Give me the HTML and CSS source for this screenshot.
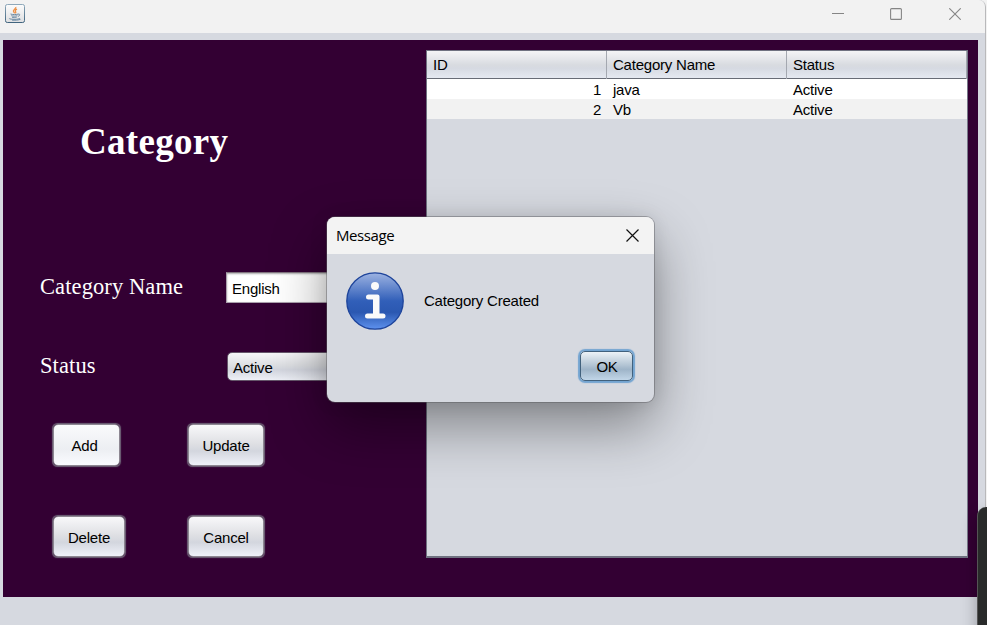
FILE: index.html
```html
<!DOCTYPE html>
<html lang="en">
<head>
<meta charset="utf-8">
<title>Category</title>
<link rel="stylesheet" href="styles.css">
</head>
<body>
<div class="window">
  <header class="titlebar">
    <svg class="java" width="20" height="20" viewBox="0 0 20 20">
      <defs><linearGradient id="jb" x1="0" y1="0" x2="0" y2="1"><stop offset="0" stop-color="#fcfcfc"/><stop offset="1" stop-color="#dedfe1"/></linearGradient>
      <linearGradient id="js" x1="0" y1="0" x2="0" y2="1"><stop offset="0" stop-color="#8ea8ba"/><stop offset="1" stop-color="#40647e"/></linearGradient></defs>
      <rect x=".5" y=".5" width="19" height="18" rx="1.8" fill="url(#jb)" stroke="url(#js)"/>
      <path d="M10.800 3c.7 1.800-3.400 2.700-2.300 4.500.3.7 1 1 .9 1.800M12 5.200c-2 1-2 1.600-1.300 2.600.4.7 0 1.100-.4 1.500" fill="none" stroke="#ed9147" stroke-width="1.300"/>
      <path d="M5.500 10c2 .8 6 .7 8 0M6.300 11.700c2 .6 4.300.6 6 0M7 13.200c1.500.5 3.300.5 4.700 0M13.300 10.200c2-.5 2 1.600-.4 2.200M4.500 14.300c-1.500 1 8 1.600 10.500.2M7 16.100c3 .3 6 .1 8.500-.8" fill="none" stroke="#6d8ba4" stroke-width="1"/>
    </svg>
    <div class="controls">
      <svg width="12" height="12" viewBox="0 0 12 12"><path d="M0 5.500h12"/></svg>
      <svg width="12" height="12" viewBox="0 0 12 12"><rect x=".6" y=".6" width="10.800" height="10.800" rx="1"/></svg>
      <svg width="12" height="12" viewBox="0 0 12 12"><path d="M.3.3l11.400 11.400M11.700.3L.3 11.700"/></svg>
    </div>
  </header>
  <main class="panel">
    <section class="form">
      <h1>Category</h1>
      <div class="field name"><label>Category Name</label><div class="input">English</div></div>
      <div class="field status"><label>Status</label><div class="combo">Active</div></div>
      <div class="buttons">
        <button class="add">Add</button><button class="update">Update</button>
        <button class="delete">Delete</button><button class="cancel">Cancel</button>
      </div>
    </section>
    <section class="table">
      <div class="row head"><span>ID</span><span>Category Name</span><span>Status</span></div>
      <div class="row"><span>1</span><span>java</span><span>Active</span></div>
      <div class="row alt"><span>2</span><span>Vb</span><span>Active</span></div>
    </section>
  </main>
</div>
<div class="dialog">
  <div class="dialog-title"><span>Message</span>
    <svg width="13" height="13" viewBox="0 0 13 13"><path d="M.5.5l12 12M12.500.5l-12 12" stroke="#111" stroke-width="1.200"/></svg>
  </div>
  <div class="message">
    <svg width="58" height="58" viewBox="0 0 58 58">
      <defs><linearGradient id="ib" x1="0" y1="0" x2="0" y2="1"><stop offset="0" stop-color="#9db3e2"/><stop offset=".5" stop-color="#315fb9"/><stop offset=".7" stop-color="#2b58b1"/><stop offset="1" stop-color="#5e92ee"/></linearGradient></defs>
      <circle cx="29" cy="29" r="28.200" fill="url(#ib)" stroke="#1e449b" stroke-width="1.300"/>
      <circle cx="29" cy="14" r="4" fill="#fafafa"/>
      <path d="M22.500 22.500H31.500a2 2 0 0 1 2 2V41.500H37a2.500 2.500 0 0 1 0 5H21.500a2.500 2.500 0 0 1 0-5H27V27.500H22.500a2.500 2.500 0 0 1 0-5z" fill="#fafafa"/>
    </svg>
    <span>Category Created</span>
  </div>
  <button class="ok">OK</button>
</div>
<div class="dark-edge"></div>
</body>
</html>
```
FILE: styles.css
```css
* { box-sizing: border-box; }
body {
  margin: 0;
  width: 987px;
  height: 625px;
  overflow: hidden;
  position: relative;
  background: #f2f2f2;
  font: 15px/20px "Liberation Sans", Arial, sans-serif;
  letter-spacing: -0.22px;
  color: #000;
}
.window {
  width: 986px;
  height: 625px;
  background: #d6d9e0;
  border-right: 1px solid #b9b9bb;
  border-top-right-radius: 7px;
  overflow: hidden;
}
.titlebar {
  height: 33px;
  background: #f2f2f2;
  display: flex;
  justify-content: space-between;
  padding: 4px 24px 0 5px;
}
.controls { display: flex; gap: 46px; padding-top: 4px; }
.controls svg { fill: none; stroke: #858585; stroke-width: 1.1; }
.controls svg:nth-child(2) { margin-right: 1px; }
.panel {
  width: 975px;
  height: 557px;
  margin: 7px 0 0 3px;
  background: #330033;
  display: flex;
}
.form { width: 423px; padding: 81px 0 0 37px; flex: none; }
h1 {
  margin: 0 0 0 40px;
  height: 42px;
  font: bold 37px/42px "Liberation Serif", "Times New Roman", serif;
  letter-spacing: 0.3px;
  color: #fff;
}
.field { display: flex; color: #fff; }
.field label {
  width: 186px;
  flex: none;
  font: 22.5px/28px "Liberation Serif", "Times New Roman", serif;
  letter-spacing: 0.1px;
}
.name { margin-top: 109px; height: 31px; }
.name label { padding-top: 1px; }
.status { margin-top: 49px; height: 29px; }
.input, .combo { width: 170px; color: #000; }
.input {
  height: 31px;
  padding: 6px 5px;
  background: #fff;
  border: 1px solid #aaa0ac;
  border-top-color: #81747f;
  box-shadow: inset 0 1px 2px #aaa;
}
.combo {
  margin-left: 1px;
  padding: 6px 5px;
  border: 1px solid #65566a;
  border-radius: 5px;
  background: linear-gradient(#f6f6f8, #dcdee2 48%, #d3d6df 62%, #eef0f7);
  line-height: 18px;
}
button {
  padding: 1px 0 0;
  font: inherit;
  letter-spacing: inherit;
  color: #000;
  border: 1px solid #8d8792;
  border-radius: 5px;
  background: linear-gradient(#f8f8fa, #dedfe3 48%, #d3d6de 65%, #eff1f9);
  box-shadow: 0 0 1px 0.5px #6f6478;
}
.buttons {
  margin: 43px 0 0 13px;
  display: grid;
  grid-template-columns: 135px 76px;
  grid-template-rows: 42px 41px;
  row-gap: 50px;
}
.add { width: 67px; padding-right: 4px; background: linear-gradient(#fafafc, #eceef2 60%, #fafbff); }
.delete { width: 72px; }
.delete, .cancel { padding-top: 2px; }
.table {
  width: 542px;
  height: 508px;
  margin-top: 10px;
  border: 1px solid #6f7180;
  border-right-color: #777989;
  border-bottom-width: 2px;
  background: #d6d9e0;
}
.row {
  display: grid;
  grid-template-columns: 180px 180px 1fr;
  height: 20px;
  line-height: 21px;
  background: #fff;
}
.row span { padding: 0 6px; }
.row:not(.head) span:first-child { text-align: right; }
.row.alt { background: #f2f2f2; }
.row.head {
  height: 28px;
  line-height: 28px;
  background: linear-gradient(#f4f4f6, #d8dbe0 52%, #d6dae2 65%, #e5e9f1);
  border-bottom: 1px solid #686c76;
}
.head span { border-right: 1px solid #a4a8b0; }
.dialog {
  position: absolute;
  left: 327px;
  top: 217px;
  width: 327px;
  height: 185px;
  border-radius: 8px;
  background: #d6d9e0;
  box-shadow: 0 0 0 1px rgba(90, 90, 96, 0.45), 0 24px 56px rgba(0, 0, 0, 0.4), 0 0 18px rgba(0, 0, 0, 0.1);
}
.dialog-title {
  height: 37px;
  padding: 0 15px 1px 9px;
  display: flex;
  align-items: center;
  justify-content: space-between;
  background: #f3f3f3;
  border-radius: 8px 8px 0 0;
  font-family: "Open Sans", "Noto Sans", sans-serif;
  letter-spacing: -0.4px;
}
.message { display: flex; align-items: center; gap: 20px; padding: 18px 0 0 19px; }
.ok {
  display: block;
  width: 53px;
  height: 30px;
  margin: 21px 0 0 253px;
  padding: 2px 0 0 1px;
  border-color: #41617d;
  background: linear-gradient(#edf2f7, #b1c3d3 48%, #9eb4c8 62%, #c1d6e8);
  box-shadow: 0 0 1px 2px #73a4d1;
}
.dark-edge {
  position: absolute;
  left: 977px;
  top: 507px;
  width: 20px;
  height: 130px;
  border-radius: 9px 0 0 0;
  background: #292b2a;
  border-left: 1px solid #555;
  box-shadow: 0 8px 16px rgba(0, 0, 0, 0.3);
}
```
